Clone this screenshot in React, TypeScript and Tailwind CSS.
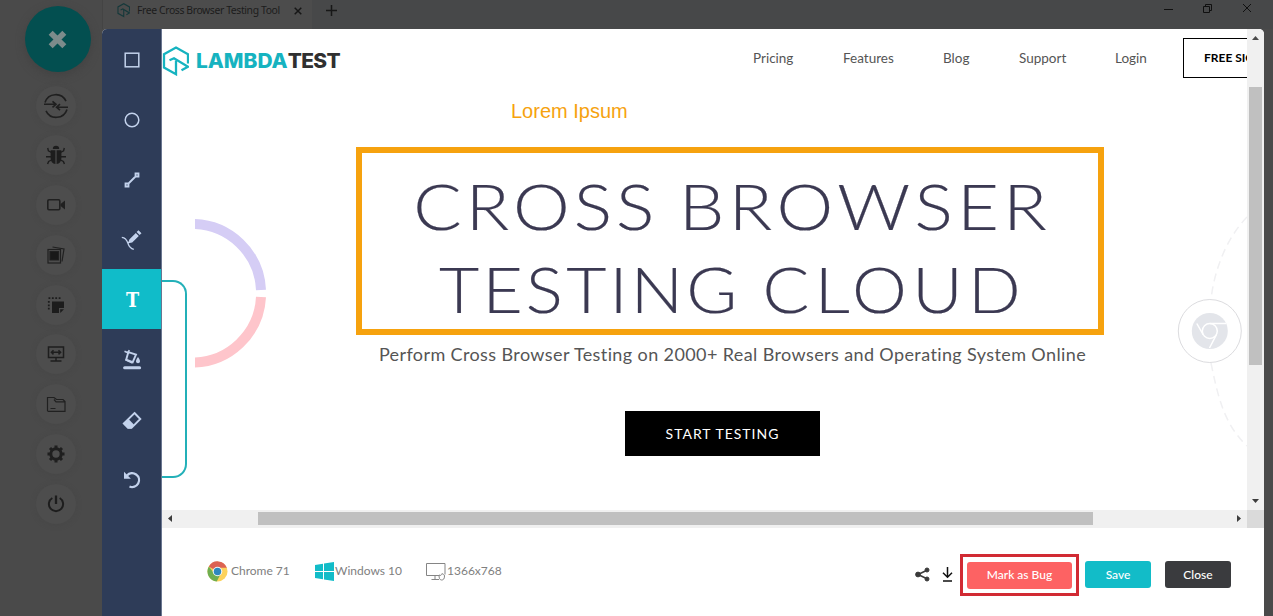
import type { ReactNode } from "react";

function SyncIcon() {
  return (
    <svg width="26" height="26" viewBox="0 0 26 26" fill="none" stroke="#1f1f1f" strokeWidth="1.6">
      <path d="M2 9.5A11.3 11.3 0 0 1 23 8.2M24 16.5A11.3 11.3 0 0 1 3 17.8" />
      <path d="M1 11.3h12M9.5 8.3l3.5 3-3.5 3M25 14.2H13.5M17 11.2l-3.5 3 3.5 3" />
    </svg>
  );
}

function BugIcon() {
  return (
    <svg width="20" height="20" viewBox="0 0 20 20" fill="#1d1d1d" stroke="#1d1d1d" strokeWidth="1.4">
      <path d="M6.8 4a3.2 3.2 0 0 1 6.4 0z" stroke="none" />
      <path d="M4.6 5.2H9.4V19C6.500 18.600 4.600 16.500 4.600 13zM15.400 5.200H10.600V19c2.900-.4 4.800-2.500 4.800-6z" stroke="none" />
      <path d="M5.500 7.500 2.400 5.800 1.700 3M14.500 7.500l3.100-1.700.7-2.800M5 11.700H0M15 11.700h5M5.500 15 2.600 16.500 1.600 19M14.500 15l2.900 1.500 1 2.500" fill="none" />
    </svg>
  );
}

function CameraIcon() {
  return (
    <svg width="20" height="14" viewBox="0 0 20 14" fill="none" stroke="#202020" strokeWidth="1.6">
      <rect x="1.800" y="1.800" width="12" height="10" rx="1.200" />
      <path d="M14.500 6 19 2.500v9L14.500 8z" fill="#202020" stroke="none" />
    </svg>
  );
}

function GalleryIcon() {
  return (
    <svg width="20" height="20" viewBox="0 0 20 20" fill="none" stroke="#202020" strokeWidth="1.200">
      <rect x="2" y="4.500" width="12.500" height="13.500" />
      <path d="M4 6.500h8.500v8.500H4z" fill="#181818" />
      <path d="M6.500 2 18 4 16 16.500" />
    </svg>
  );
}

function CropIcon() {
  return (
    <svg width="20" height="20" viewBox="0 0 20 20" fill="#1c1c1c">
      <path d="M6 6.500h12V13h-5v5H6zM14.200 14.200H18L14.200 18z" />
      <path d="M2.500 3.200h13M2.800 6v10" fill="none" stroke="#1c1c1c" strokeWidth="1.800" strokeDasharray="1.800 1.600" />
    </svg>
  );
}

function MonitorIcon() {
  return (
    <svg width="18" height="18" viewBox="0 0 18 18" fill="none" stroke="#1e1e1e" strokeWidth="1.500">
      <rect x="1.500" y="2" width="15" height="10.500" />
      <path d="M4.500 7.300h9M6.500 5.200 4.400 7.300l2.100 2.100M11.500 5.200l2.100 2.100-2.100 2.100M9 12.500V16M3.500 16h11" />
    </svg>
  );
}

function FolderIcon() {
  return (
    <svg width="20" height="17" viewBox="0 0 20 17" fill="none" stroke="#202020" strokeWidth="1.200">
      <path d="M1.500 15V1.500H8l2.500 2h6.500l2 2v9.800H1.500M8 3.500l2 2.300h9M4.500 12.500h5" />
    </svg>
  );
}

function GearIcon() {
  return (
    <svg width="18" height="18" viewBox="0 0 18 18" fill="none" stroke="#1f1f1f">
      <circle cx="9" cy="9" r="5.200" strokeWidth="3" />
      <path d="M9 .5v3M9 14.500v3M.5 9h3M14.500 9h3M3 3l2 2M13 13l2 2M15 3l-2 2M5 13l-2 2" strokeWidth="3" />
    </svg>
  );
}

function PowerIcon() {
  return (
    <svg width="18" height="18" viewBox="0 0 18 18" fill="none" stroke="#1d1d1d" strokeWidth="2">
      <path d="M5.300 3A7.100 7.100 0 1 0 12.700 3" />
      <path d="M9 .5v8.500" strokeWidth="2.300" />
    </svg>
  );
}

const sessionActions: { name: string; icon: ReactNode }[] = [
  { name: "sync", icon: <SyncIcon /> },
  { name: "bug", icon: <BugIcon /> },
  { name: "video", icon: <CameraIcon /> },
  { name: "gallery", icon: <GalleryIcon /> },
  { name: "crop", icon: <CropIcon /> },
  { name: "resolution", icon: <MonitorIcon /> },
  { name: "files", icon: <FolderIcon /> },
  { name: "settings", icon: <GearIcon /> },
  { name: "power", icon: <PowerIcon /> },
];

function SessionBar() {
  return (
    <aside className="flex w-[102px] shrink-0 flex-col items-center pt-[6px] pl-[10px]">
      <div className="mr-[-3px] mb-[13.500px] flex size-[66px] shrink-0 items-center justify-center rounded-full bg-[#034f50] shadow-[0_3px_8px_#424242]">
        <svg width="19" height="19" viewBox="0 0 20 20" stroke="#7c8b8b" strokeWidth="6">
          <path d="m2.800 2.800 14.400 14.400M17.200 2.800 2.800 17.200" />
        </svg>
      </div>
      {sessionActions.map((a) => (
        <div key={a.name} className="mb-[9.800px] flex size-10 shrink-0 items-center justify-center rounded-full bg-[#4d4d4d] shadow-[0_1px_5px_#474747]">
          {a.icon}
        </div>
      ))}
    </aside>
  );
}

function LogoMark({ size, color }: { size: number; color: string }) {
  return (
    <svg className="shrink-0" width={size} height={(size * 30) / 27} viewBox="0 0 27 30" fill="none" stroke={color} strokeWidth="2.300">
      <path d="M26 17.500V8.200L14 1.500 2 8.200V21.500L14 28.200V14.500" />
      <path d="M7.500 14.300 12 12.300 26 20.700 19.500 24.300" />
    </svg>
  );
}

function TabStrip() {
  return (
    <div className="flex h-[29px] shrink-0 items-center bg-[#4a4a4a] font-['Noto_Sans',sans-serif] text-[#1c1c1c]">
      <div className="flex h-full w-[210px] items-center border-l border-[#444] bg-[#4c4c4c] pb-[8px] pl-[14px]">
        <LogoMark size={13} color="#16393b" />
        <span className="ml-[7px] w-[147px] shrink-0 text-[10.400px] tracking-[-0.380px] whitespace-nowrap">Free Cross Browser Testing Tool</span>
        <svg className="ml-[10px] shrink-0" width="8" height="8" viewBox="0 0 8 8" stroke="#161616" strokeWidth="1.500">
          <path d="m.7.7 6.600 6.600M7.300.7.7 7.300" />
        </svg>
      </div>
      <div className="flex h-full flex-1 items-center bg-[#474849] pb-[8px] pl-[14px]">
        <svg width="11" height="11" viewBox="0 0 11 11" stroke="#171717" strokeWidth="1.500">
          <path d="M5.500 0v11M0 5.500h11" />
        </svg>
      </div>
      <div className="flex h-full w-[120px] items-center bg-[#474849] pb-[13px] pl-[11px]">
        <svg width="9" height="9" viewBox="0 0 9 9" stroke="#101010"><path d="M0 5.500h9" /></svg>
        <svg className="ml-[30px]" width="9" height="9" viewBox="0 0 9 9" fill="none" stroke="#101010">
          <path d="M.5 2.500h6v6h-6zM2.500 2.500v-2h6v6h-2" />
        </svg>
        <svg className="ml-[30px]" width="10" height="10" viewBox="0 0 10 10" stroke="#101010"><path d="m1 1 8 8M9 1 1 9" /></svg>
      </div>
    </div>
  );
}

const tools: { name: string; icon: ReactNode }[] = [
  {
    name: "rectangle",
    icon: <svg width="16" height="16" viewBox="0 0 16 16" fill="none" stroke="#c3d2ec" strokeWidth="1.500"><rect x="1.200" y="1.200" width="13.600" height="13.600" /></svg>,
  },
  {
    name: "ellipse",
    icon: <svg width="16" height="16" viewBox="0 0 16 16" fill="none" stroke="#c3d2ec" strokeWidth="1.500"><circle cx="8" cy="8" r="6.800" /></svg>,
  },
  {
    name: "line",
    icon: (
      <svg width="16" height="16" viewBox="0 0 16 16" fill="none" stroke="#c3d2ec" strokeWidth="1.800">
        <path d="M4 12 12 4M1.500 11.500h3v3h-3zM11.500 1.500h3v3h-3z" />
      </svg>
    ),
  },
  {
    name: "pencil",
    icon: (
      <svg width="22" height="22" viewBox="0 0 22 22" fill="#c3d2ec">
        <path d="M7.300 14.300 8.300 10.400 14.800 3.900 17.800 6.900 11.200 13.400zM15.600 3.100l1.900-1.900 3 3-1.900 1.900z" />
        <path d="M.8 8.300C5.500 8.800 6.200 12 7 14.500c1 3.200 2.500 5 5.800 5.800M7 14.300l2.500-2.500" fill="none" stroke="#c3d2ec" strokeWidth="1.300" />
      </svg>
    ),
  },
  { name: "text", icon: <span className="font-['DejaVu_Serif',serif] text-[20px] leading-none font-bold text-white"><span className="inline-block scale-x-[0.880]">T</span></span> },
  {
    name: "fill",
    icon: (
      <svg width="20" height="22" viewBox="0 0 20 22" fill="none" stroke="#c3d2ec" strokeWidth="1.900">
        <path d="M6.300 3.200 14 5.600 10.700 13.200 4.200 10.700z" />
        <path d="M7 4.300 2.500 2.300M7.300 1.200 5.500 4.500M3.500 10.800 10.500 14" strokeWidth="1.600" />
        <path d="M16 8c3.200 4 2.100 6.200 0 6.200s-3.200-2.200 0-6.200z" fill="#c3d2ec" stroke="none" />
        <path d="M2.600 18.700h15" strokeWidth="3" strokeLinecap="round" />
      </svg>
    ),
  },
  {
    name: "eraser",
    icon: (
      <svg className="mt-[2px]" width="20" height="20" viewBox="0 0 20 20" fill="none" stroke="#c3d2ec" strokeWidth="1.900">
        <path d="M12.500 2 18.300 8 9.500 16.800H6L1.800 12.600z" />
        <path d="m6.500 8 5.800 6-3 3.500H6L1.200 12.600z" fill="#c3d2ec" stroke="none" />
      </svg>
    ),
  },
  {
    name: "undo",
    icon: (
      <svg width="18" height="18" viewBox="0 0 18 18" fill="none" stroke="#c3d2ec" strokeWidth="2.300">
        <path d="M4 4.500A6.900 6.900 0 1 1 6.500 15.500" />
        <path d="M1 .8v6.900h6.900z" fill="#c3d2ec" stroke="none" />
      </svg>
    ),
  },
];

function Toolbar() {
  return (
    <div className="flex w-[60px] shrink-0 flex-col border-r border-[#6a7690] bg-[#2e3c58]">
      {tools.map((t) => (
        <button
          key={t.name}
          className={`flex h-[60px] w-full items-center justify-center pt-px pl-px ${t.name === "text" ? "bg-[#10bcc9]" : ""}`}
        >
          {t.icon}
        </button>
      ))}
    </div>
  );
}

function SiteHeader() {
  return (
    <header className="flex h-[58px] w-[1160px] items-center font-[Lato,sans-serif] text-[13.500px] text-[#555]">
      <div className="flex w-[591px] items-center pt-[5px]">
        <LogoMark size={27} color="#16b3c0" />
        <span className="ml-[7px] origin-left scale-x-[1.045] font-[Inter,sans-serif] text-[20px] leading-none font-extrabold text-[#303030]">
          <span className="tracking-[-0.020px] text-[#16b3c0]">LAMBDA</span>
          <span className="tracking-[-0.600px]">TEST</span>
        </span>
      </div>
      <nav className="flex">
        <span className="w-[90px]">Pricing</span>
        <span className="w-[100px]">Features</span>
        <span className="w-[76px]">Blog</span>
        <span className="w-[96px]">Support</span>
        <span className="w-[68px]">Login</span>
      </nav>
      <div className="flex h-[40px] w-[130px] items-center border border-black pl-[20px] text-[12px] font-bold whitespace-nowrap text-black">
        FREE SIGN UP
      </div>
    </header>
  );
}

function PageDecor() {
  return (
    <>
      <div className="absolute top-[251px] left-0 h-[198px] w-[25px] rounded-r-[14px] border-2 border-l-0 border-[#23b0b8]" />
      <svg className="absolute top-[190px] left-[33px]" width="72" height="149" viewBox="0 0 72 149" fill="none" strokeWidth="10">
        <path d="M-3 5A69 69 0 0 1 66 71" stroke="#d5cdf5" />
        <path d="M66 78A69 69 0 0 1-3 143.500" stroke="#fec5cb" />
      </svg>
      <svg className="absolute top-[180px] left-[1010px]" width="75" height="250" viewBox="0 0 75 250" fill="none">
        <path d="M75 8C52 32 42 65 39 90M39 154C46 188 52 215 75 237" stroke="#f0f0f2" strokeWidth="1.500" strokeDasharray="8 5" />
        <circle cx="37.800" cy="122" r="31.500" fill="#fff" stroke="#dcdcdf" />
        <circle cx="37.800" cy="122" r="18" fill="#e3e5ea" />
        <circle cx="37.800" cy="122" r="7.500" stroke="#fff" strokeWidth="1.500" />
        <path d="M37.800 114.500H54M31.300 125.800 24.800 114.500M44.300 125.800 37.500 139" stroke="#fff" strokeWidth="1.500" />
      </svg>
    </>
  );
}

function Annotations() {
  return (
    <>
      <div className="absolute top-[70px] left-[349px] font-['Liberation_Sans',sans-serif] text-[20px] leading-6 whitespace-nowrap text-[#f6a20e]">
        Lorem Ipsum
      </div>
      <div className="absolute top-[118px] left-[194px] h-[188px] w-[748px] border-[6px] border-[#f6a20e]" />
    </>
  );
}

function Hero() {
  return (
    <div className="flex w-[1141px] flex-col items-center pt-[77px] font-[Lato,sans-serif]">
      <h1 className="flex flex-col items-center text-[63px] leading-[83px] font-light whitespace-nowrap text-[#3b3952] [-webkit-text-stroke:0.200px_#3b3952]">
        <span className="scale-x-[1.138] tracking-[3.500px] [word-spacing:-2.500px]">
          CROSS <span className="tracking-[3.900px]">BROWSER</span>
        </span>
        <span className="scale-x-[1.101] tracking-[2.900px]">
          TESTING <span className="tracking-[4.800px]">CLOUD</span>
        </span>
      </h1>
      <p className="mt-[12px] text-[18px] leading-6 tracking-[0.390px] whitespace-nowrap text-[#555]">
        Perform Cross Browser Testing on 2000+ Real Browsers and Operating System Online
      </p>
      <button className="mt-[45px] mr-[20px] h-[45px] w-[195px] bg-black text-[14px] tracking-[1px] text-white">START TESTING</button>
    </div>
  );
}

function VerticalScroll() {
  return (
    <div className="flex w-[17px] shrink-0 flex-col items-center bg-[#f0f0f0]">
      <svg className="mt-[7px]" width="7" height="4" viewBox="0 0 7 4" fill="#4a4a4a"><path d="M0 4 3.500 0 7 4z" /></svg>
      <div className="mt-[47px] h-[278px] w-[13px] bg-[#c0c0c0]" />
      <svg className="mt-auto mb-[7px]" width="7" height="4" viewBox="0 0 7 4" fill="#3c3c3c"><path d="M0 0h7L3.500 4z" /></svg>
    </div>
  );
}

function HorizontalScroll() {
  return (
    <div className="flex h-[18px] shrink-0">
      <div className="flex flex-1 items-center bg-[#f0f0f0] pb-px pl-[6px]">
        <svg width="4" height="7" viewBox="0 0 4 7" fill="#3c3c3c"><path d="M4 0v7L0 3.500z" /></svg>
        <div className="ml-[86px] h-[13px] w-[835px] bg-[#c0c0c0]" />
        <svg className="mr-[6px] ml-auto" width="4" height="7" viewBox="0 0 4 7" fill="#3c3c3c"><path d="M0 0v7l4-3.500z" /></svg>
      </div>
      <div className="w-[17px] bg-[#dadada]" />
    </div>
  );
}

function Footer() {
  return (
    <footer className="flex flex-1 items-start bg-white pl-[45px] font-[Lato,sans-serif] text-[12px] text-[#808080]">
      <div className="flex w-[108px] items-center pt-[33px]">
        <svg width="21" height="21" viewBox="0 0 22 22">
          <circle cx="11" cy="11" r="10.500" fill="#fcd25c" />
          <path d="M11 11 1.900 5.750A10.500 10.500 0 0 1 20.800 7H11z" fill="#dc6253" />
          <path d="M1.900 5.750A10.500 10.500 0 0 0 10.200 21.500L14.500 13 7.200 12.700z" fill="#6fae50" />
          <circle cx="11" cy="11" r="5" fill="#f5f7f8" />
          <circle cx="11" cy="11" r="3.900" fill="#2e87bd" />
        </svg>
        <span className="mt-[-2px] ml-[3px] tracking-[-0.020px]">Chrome 71</span>
      </div>
      <div className="flex w-[111px] items-center pt-[34px]">
        <svg width="19" height="19" viewBox="0 0 19 19" fill="#12bcc8">
          <path d="M0 3 8 1.700V9H0zM9 1.500 19 0v9H9zM0 10h8v7.300L0 16zM9 10h10v9L9 17.500z" />
        </svg>
        <span className="mt-[-2px] ml-px">Windows 10</span>
      </div>
      <div className="flex flex-1 items-center pt-[34px]">
        <svg width="20" height="19" viewBox="0 0 20 19" fill="none" stroke="#858585">
          <path d="M13 13.500H.5V1.500h18.500v11M9 13.500V17M5.500 17.500H13" />
          <path d="M13 13c2 1 2.500 0 3-1.500 1 1 2.500.8 2.500 2.500 0 3-1.200 4-3 4s-2.500-2-2.500-5z" />
        </svg>
        <span className="mt-[-2px] ml-px">1366x768</span>
      </div>
      <div className="flex items-center pt-[26px] pr-[33px] font-medium text-white">
        <svg className="-mt-[2px]" width="15" height="15" viewBox="0 0 15 15" fill="#3a3a3a" stroke="#3a3a3a">
          <path d="M12 3.300 3 7.500l9 4.200" fill="none" strokeWidth="1.600" />
          <circle cx="3" cy="7.500" r="2.400" /><circle cx="12" cy="3" r="2" /><circle cx="12" cy="12" r="2" />
        </svg>
        <svg className="-mt-[2px] ml-[12px]" width="11" height="15" viewBox="0 0 11 15" fill="none" stroke="#111" strokeWidth="1.500">
          <path d="M5.500 0v10M1 5.800l4.500 4.500L10 5.800M1 14h9" />
        </svg>
        <div className="ml-[7px] flex h-[42px] w-[119px] items-center justify-center border-[3px] border-[#d12a33]">
          <button className="h-[27px] w-[105px] rounded-[3px] bg-[#fd6263]">Mark as Bug</button>
        </div>
        <button className="-mt-px ml-[6px] h-[27px] w-[66px] rounded-[3px] bg-[#12bcc8]">Save</button>
        <button className="-mt-px ml-[14px] h-[27px] w-[66px] rounded-[3px] bg-[#3a3b3e]">Close</button>
      </div>
    </footer>
  );
}

export default function App() {
  return (
    <div className="flex h-[616px] w-[1273px] overflow-hidden bg-[#4a4a4a]">
      <SessionBar />
      <div className="flex min-w-0 flex-1 flex-col">
        <TabStrip />
        <div className="mr-[9px] flex min-h-0 flex-1 overflow-hidden rounded-t-[5px] bg-white">
          <Toolbar />
          <div className="flex min-w-0 flex-1 flex-col">
            <div className="flex h-[481px] shrink-0">
              <main className="relative min-w-0 flex-1 overflow-hidden bg-white">
                <PageDecor />
                <SiteHeader />
                <Hero />
                <Annotations />
              </main>
              <VerticalScroll />
            </div>
            <HorizontalScroll />
            <Footer />
          </div>
        </div>
      </div>
    </div>
  );
}
